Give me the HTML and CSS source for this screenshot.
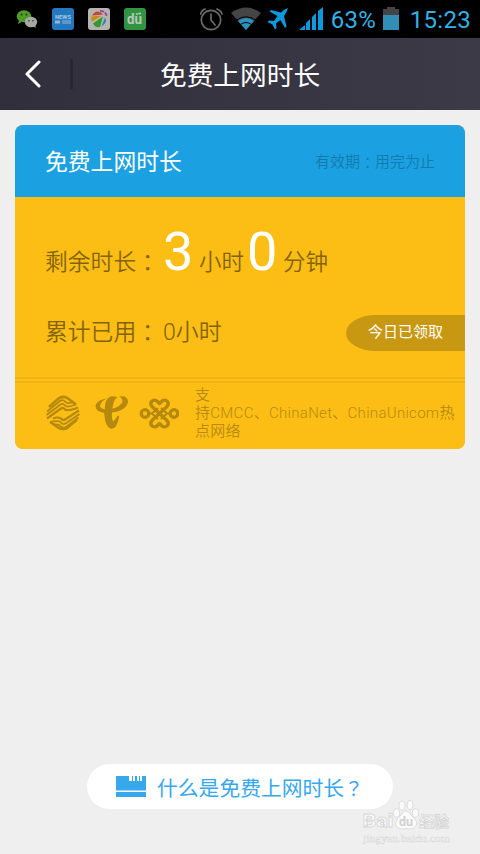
FILE: index.html
```html
<!DOCTYPE html>
<html lang="zh-CN">
<head>
    <meta charset="UTF-8">
    <meta name="viewport" content="width=device-width, initial-scale=1.0">
    <title>免费上网时长</title>
    <link rel="stylesheet" href="styles.css">
</head>
<body>
    <div class="status">
        <div class="apps">
            <svg class="app" viewBox="0 0 22 22">
                <ellipse cx="8" cy="8.300" rx="7.300" ry="6" fill="#519b28"/>
                <path d="M3 12l-1 4 4-2z" fill="#519b28"/>
                <circle cx="5.500" cy="6.500" r="1" fill="#193d0b"/>
                <circle cx="10.500" cy="6.500" r="1" fill="#193d0b"/>
                <ellipse cx="15" cy="14" rx="6.200" ry="5.200" fill="#a5aaa5"/>
                <path d="M17 18l2.500 2 0-4z" fill="#a5aaa5"/>
                <circle cx="13" cy="12.700" r=".8" fill="#333"/>
                <circle cx="17" cy="12.700" r=".8" fill="#333"/>
            </svg>
            <svg class="app" viewBox="0 0 22 22">
                <rect width="22" height="22" rx="3" fill="#2478bd"/>
                <text x="3" y="10.500" class="news" textLength="16" lengthAdjust="spacingAndGlyphs">NEWS</text>
                <path d="M3 12.500h5v3H3zM10 12.500h9v1h-9zM10 14.500h9v1h-9z" fill="#8fb6d8"/>
            </svg>
            <svg class="app" viewBox="0 0 22 22">
                <rect width="22" height="22" rx="3" fill="#b5b5b0"/>
                <path d="M4 7.500Q9 0 15 6.500z" fill="#c8452b"/>
                <path d="M3.500 8.500L14 7.500 4 13.500q-1.500-2-.5-5z" fill="#c98a12"/>
                <path d="M5 15.500L15 8.500l-3 10.500q-5 1-7-3.500z" fill="#35982c"/>
                <path d="M17 9.500q3 5-3.500 9z" fill="#2784b5"/>
                <path d="M12 3q6 0 7 6" fill="none" stroke="#9a47aa" stroke-width="2" stroke-dasharray="4 1"/>
            </svg>
            <svg class="app" viewBox="0 0 22 22">
                <rect width="22" height="22" rx="3" fill="#309443"/>
                <text x="3" y="16" class="du" textLength="15" lengthAdjust="spacingAndGlyphs">dü</text>
                <path d="M13 7q0-2 4-2" fill="none" stroke="#b8c8b8"/>
            </svg>
        </div>
        <svg class="signals" viewBox="0 0 128 28">
            <g fill="none" stroke="#6b6b6b" stroke-width="1.700" stroke-linecap="round">
                <circle cx="11" cy="15" r="9.700"/>
                <path d="M11 9v6l4 5M.8 9Q1 6 5 4M22 9Q21.500 6 17 4"/>
            </g>
            <path d="M31 8Q46-3 61 8L46 25z" fill="#454545"/>
            <path d="M38 16Q46 10 54 16L46 25z" fill="#2b91bd"/>
            <path d="M36 15.500Q46 8 56 15.500M40.500 19.500Q46 15.500 51.500 19.500" fill="none" stroke="#000" stroke-width="1"/>
            <path d="M88 3Q84 4 81 7.500L71 5l-1.500 1.500 8 4.500-3.500 5-5-.5-1.500 1.500 5 2.500 2.500 5 1.500-1.500-.5-4.500 4.500-3.500 4.500 8 1.500-1.500-2.500-10.500Q87 7 88 3z" fill="#0d99dd"/>
            <path d="M99 25l6-5v5zM106 25v-7l4-4v11zM112 25v-13l4-4v17zM118 25V6l5-4v23z" fill="#0d99dd"/>
        </svg>
        <span class="percent">63%</span>
        <svg class="battery" viewBox="0 0 16 24">
            <path d="M4 1h8v2h4v6H0V3h4z" fill="#454545"/>
            <path d="M0 9h16v15H0z" fill="#318fb7"/>
        </svg>
        <span class="clock">15:23</span>
    </div>

    <div class="header">
        <svg class="back" viewBox="0 0 18 30"><path d="M16 3L4 15l12 12" fill="none" stroke="#fff" stroke-width="3" stroke-linecap="round" stroke-linejoin="round"/></svg>
        <i class="line"></i>
        <h1>免费上网时长</h1>
    </div>

    <div class="card">
        <div class="card-top">
            <h2>免费上网时长</h2>
            <span class="valid">有效期<span class="mid" lang="zh-TW">：</span>用完为止</span>
        </div>
        <div class="card-body">
            <div class="row remain">
                <span class="label">剩余时长<span class="mid" lang="zh-TW">：</span></span>
                <b>3</b>
                <span class="unit">小时</span>
                <b>0</b>
                <span class="unit">分钟</span>
            </div>
            <div class="row used">
                <span class="label">累计已用<span class="mid" lang="zh-TW">：</span></span>
                <span class="total">0小时</span>
                <span class="got">今日已领取</span>
            </div>
        </div>
        <div class="card-bottom">
            <svg class="logos" viewBox="0 0 134 36">
                <!-- China Mobile -->
                <g fill="none" stroke="#b5890e" stroke-linejoin="round">
                    <path d="M4 12L13 4Q18 0 23 3.500L31 9.500" stroke-width="2.600"/>
                    <path d="M2 16.500L15 6Q18 4 20 6.500Q22 9 27 7.500" stroke-width="1.800"/>
                    <path d="M1.500 20L15.500 9.500Q18 8 20 10.500Q22 13 31 9.500" stroke-width="1.800"/>
                    <path d="M2 23.500L16 13.500Q18 12 20 14.500Q23 16.500 33 12.500" stroke-width="2.200"/>
                    <path d="M34 15.500L20 24.500Q18 26 16 23.500Q13 21.500 8 23.500" stroke-width="2.200"/>
                    <path d="M34.500 19L20.500 28.500Q18 30 16 27.500Q14 25 5 27" stroke-width="1.800"/>
                    <path d="M33.500 22.500L21 32Q18 33.500 16 31.500Q14 29 9 29.500" stroke-width="1.800"/>
                    <path d="M5 27L13 32.500Q18 36 23 32.500L32 25" stroke-width="2.200"/>
                </g>
                <!-- China Telecom -->
                <g fill="#b5890e">
                    <path d="M62 3.500Q51 5 50.500 11.500Q51 18 62 18Q81 17 83 7Q83 0 74 1.500Q79 4 77 8Q72 14.500 60 14.500Q53 13 56 8.500Q58 5 62 3.500z"/>
                    <path d="M71 2.500Q63 0 61 9L60 19Q61 32 66 33Q71 34 73.500 21Q69 28 67.500 27Q65 23 67 11Q68 5 71 2.500z" stroke="#b5890e" stroke-width="1.500"/>
                </g>
                <!-- China Unicom -->
                <g fill="none" stroke="#b5890e" stroke-width="3.300" stroke-linejoin="round">
                    <circle cx="100" cy="18.500" r="3.800"/>
                    <circle cx="129" cy="18.500" r="3.800"/>
                    <path d="M114.500 18.500L107 11.500Q104.500 8.500 107 6Q110 4 112.500 6.500L114.500 8.500L116.500 6.500Q119 4 122 6Q124.500 8.500 122 11.500z"/>
                    <path d="M114.500 18.500L107 25.500Q104.500 28.500 107 31Q110 33 112.500 30.500L114.500 28.500L116.500 30.500Q119 33 122 31Q124.500 28.500 122 25.500z"/>
                    <path d="M104 18.500h3l6-5.500M107 18.500l6 5.500M125 18.500h-3l-6-5.500M122 18.500l-6 5.500" stroke-width="2.200"/>
                </g>
            </svg>
            <p>支<br>持CMCC、ChinaNet、ChinaUnicom热<br>点网络</p>
        </div>
    </div>

    <a class="help">
        <svg viewBox="0 0 30 21">
            <path d="M0 0h13v5h3V0h1v5h2V0h2v5h2V0h1v5h2V0h4v14.500H0zM0 16h30v5.500H0z" fill="#37a8ec"/>
        </svg>
        <span>什么是免费上网时长<span class="ask" lang="zh-TW">？</span></span>
    </a>

    <svg class="mark" viewBox="0 0 94 50">
        <g fill="#fafafa" stroke="#d6d6d6" stroke-width=".8">
            <ellipse cx="35.500" cy="16" rx="3.200" ry="4.200"/>
            <ellipse cx="41" cy="8.500" rx="3" ry="4.500"/>
            <ellipse cx="49" cy="8" rx="3" ry="4.500"/>
            <ellipse cx="54.500" cy="16" rx="3.200" ry="4.200"/>
            <path d="M45 14Q48 14 50 18Q58 25 55 29Q52 33 45 31.500Q38 33 35 29Q33 25 40 18Q42 14 45 14z"/>
            <text x="1.500" y="30" class="bai" textLength="31" lengthAdjust="spacingAndGlyphs">Bai</text>
            <text x="58" y="29.500" class="jy">经验</text>
            <text x="2" y="44.500" class="url" textLength="87" lengthAdjust="spacingAndGlyphs">jingyan.baidu.com</text>
        </g>
        <text x="38" y="29" class="paw" textLength="14" lengthAdjust="spacingAndGlyphs">du</text>
    </svg>
</body>
</html>
```
FILE: styles.css
```css
* {
    box-sizing: border-box;
}
body {
    margin: 0;
    height: 854px;
    overflow: hidden;
    display: flex;
    flex-direction: column;
    position: relative;
    background: #efefef;
    font-family: Roboto, "Noto Sans CJK SC", sans-serif;
}
h1, h2, p {
    margin: 0;
    font-weight: normal;
}
svg {
    display: block;
    flex-shrink: 0;
}
/* full-width punctuation centred in its box */
.mid, .ask {
    font-family: "Noto Sans CJK TC", sans-serif;
    line-height: 1;
}
.mid {
    vertical-align: -0.04em;
}
.ask {
    font-size: 19px;
}
.status {
    height: 38px;
    padding: 0 9px 0 16px;
    display: flex;
    align-items: center;
    background: #000;
    color: #33b1e3;
    font-size: 24px;
}
.apps {
    display: flex;
    gap: 14px;
    flex: 1;
}
.app {
    width: 22px;
    height: 22px;
}
.news {
    font-size: 6px;
    font-weight: bold;
    fill: #a9c8e0;
}
.du {
    font-size: 14px;
    font-weight: bold;
    fill: #b8c8b8;
}
.signals {
    width: 128px;
    height: 28px;
}
.percent {
    width: 46px;
    margin: 2px 0 0 3px;
    letter-spacing: 0.3px;
    white-space: nowrap;
}
.battery {
    width: 16px;
    height: 24px;
    margin: 0 11px 2px 6px;
}
.clock {
    margin-top: 2px;
    letter-spacing: 0.3px;
}
.header {
    height: 72px;
    padding-left: 23px;
    display: flex;
    align-items: center;
    background: linear-gradient(90deg, #322f3c, #3c3a46);
    color: #fff;
}
.back {
    width: 18px;
    height: 30px;
}
.line {
    width: 3px;
    height: 30px;
    margin-left: 29px;
    background: #292632;
}
.header h1 {
    margin: 3px 0 0 87px;
    font-size: 26.7px;
    line-height: 72px;
}
.card {
    margin: 15px 15px 0;
    height: 324px;
    border-radius: 8px;
    overflow: hidden;
    background: #fcbe14;
}
.card-top {
    height: 72px;
    padding: 0 30px 2px;
    display: flex;
    align-items: center;
    justify-content: space-between;
    background: #1ba1e2;
}
.card-top h2 {
    color: #fff;
    font-size: 22.8px;
}
.valid {
    color: #147aab;
    font-size: 15px;
    font-weight: 350;
}
.card-body {
    height: 180px;
    padding-left: 30px;
    color: #83630d;
    font-size: 22.5px;
    font-weight: 350;
}
.row {
    display: flex;
    align-items: baseline;
    white-space: nowrap;
}
.remain {
    height: 100px;
    line-height: 110px;
}
.label {
    width: 118px;
    font-size: 22.8px;
}
.remain b {
    width: 36px;
    color: #fff;
    font-size: 54px;
    font-weight: normal;
}
.unit {
    width: 48px;
}
.used {
    height: 70px;
    line-height: 72px;
}
.total {
    font-size: 23px;
}
.got {
    width: 119px;
    height: 36px;
    margin: 18px 0 0 auto;
    padding-left: 22px;
    align-self: flex-start;
    border-radius: 30px 0 0 30px / 18px 0 0 18px;
    background: #c99812;
    color: #fff;
    font-size: 15px;
    font-weight: normal;
    line-height: 34px;
}
.card-bottom {
    height: 72px;
    padding: 9px 0 0 30px;
    display: flex;
    background: linear-gradient(#f1b313 2px, #fcbe14 2px, #fcbe14 4px, #f1b313 4px, #f1b313 6px, #fcbe14 6px);
}
.logos {
    width: 134px;
    height: 36px;
    margin-top: 9px;
}
.card-bottom p {
    margin-left: 16px;
    color: #b78a12;
    font-size: 15px;
    font-weight: 350;
    letter-spacing: 0.3px;
    line-height: 18px;
    white-space: nowrap;
}
.help {
    width: 306px;
    height: 45px;
    margin: auto 0 45px 87px;
    padding-left: 29px;
    display: flex;
    align-items: center;
    border-radius: 23px;
    background: #fff;
    color: #37a8ec;
    font-size: 20.8px;
}
.help svg {
    width: 30px;
    height: 21px;
    margin: 0 11px 1px 0;
}
/* watermark lies over the button corner */
.mark {
    position: absolute;
    left: 361px;
    top: 797px;
    width: 94px;
    height: 50px;
}
.bai {
    font-size: 19px;
    font-weight: bold;
}
.jy {
    font-size: 15px;
    font-weight: bold;
}
.url {
    font-family: "Liberation Serif", serif;
    font-size: 10px;
    stroke-width: 0.4px;
}
.paw {
    font-size: 13px;
    font-weight: bold;
    fill: #d0d0d0;
}
```
